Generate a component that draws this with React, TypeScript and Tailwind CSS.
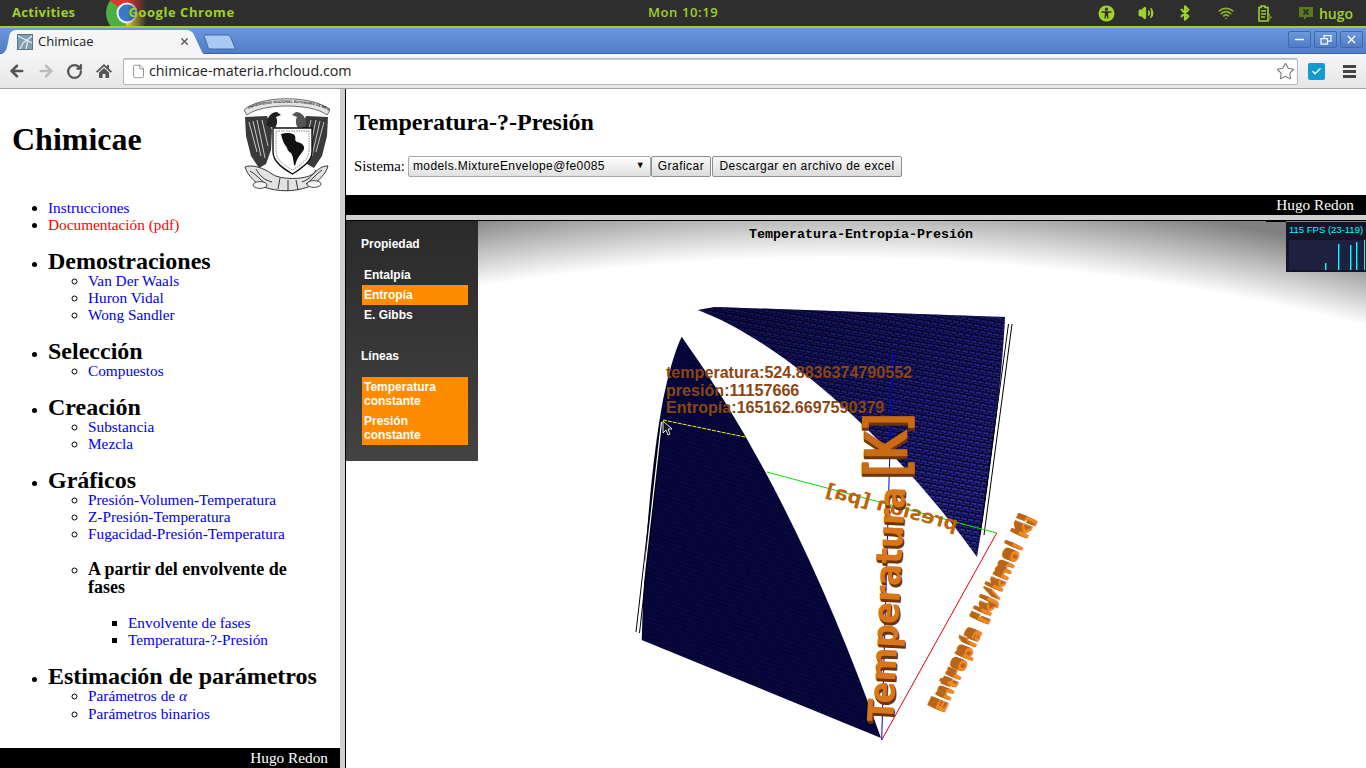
import { ArrowLeft, ArrowRight, RotateCw, Star, File, Minus, X, Check, Volume2, Bluetooth, Wifi } from 'lucide-react';

const serif = 'font-["Liberation_Serif",serif]';

function ChromeLogo() {
    return (
        <svg width="44" height="26" viewBox="0 0 44 26" className="absolute left-[105px] top-0">
            <defs>
                <linearGradient id="fadeLogo" x1="0" x2="1" y1="0" y2="0">
                    <stop offset="0.5" stopColor="#2e2e2e" stopOpacity="0" />
                    <stop offset="0.95" stopColor="#2e2e2e" stopOpacity="1" />
                </linearGradient>
            </defs>
            <circle cx="22" cy="13" r="21" fill="#4caf3f" />
            <path d="M5 1 A21 21 0 0 1 43 13 L22 13 Z" fill="#d8382e" />
            <path d="M43 13 A21 21 0 0 1 20 34 L22 13 Z" fill="#e8c020" />
            <circle cx="22" cy="13" r="10.5" fill="#eef2f6" />
            <circle cx="22" cy="13" r="8.5" fill="#3b78c8" />
            <rect x="0" y="0" width="44" height="26" fill="url(#fadeLogo)" />
        </svg>
    );
}

function TopBar() {
    return (
        <div className='relative flex h-[28px] items-center border-b-2 border-[#9fd126] bg-[#2e2e2e] pr-[13px] font-["Open_Sans",sans-serif] text-[13px] font-bold tracking-[0.3px] text-[#9fd126]'>
            <span className="ml-[12px]">Activities</span>
            <ChromeLogo />
            <span className="relative ml-[53px] tracking-[0.55px]">Google Chrome</span>
            <span className="absolute left-[648px] font-semibold tracking-[0.6px]">Mon 10:19</span>
            <div className="ml-auto flex items-center">
                <svg width="17" height="17" viewBox="0 0 17 17" className="mr-[23px]">
                    <circle cx="8.5" cy="8.5" r="8" fill="#9fd126" />
                    <circle cx="8.5" cy="4.2" r="1.6" fill="#2e2e2e" />
                    <path d="M3.5 6.2 L13.5 6.2 L13.5 7.4 L10 8 L10.6 13.5 L9.4 13.5 L8.5 10 L7.6 13.5 L6.4 13.5 L7 8 L3.5 7.4 Z" fill="#2e2e2e" />
                </svg>
                <Volume2 size={16} strokeWidth={2.4} className="mr-[23px] fill-[#9fd126]" />
                <Bluetooth size={16} strokeWidth={3.2} className="mr-[25px]" />
                <Wifi size={16} strokeWidth={2.6} className="mr-[24px] opacity-80" />
                <svg width="15" height="17" viewBox="0 0 15 17" className="mr-[25px]">
                    <path d="M3 1 H7 V2.5 H10 V16 H1 V2.5 H3 Z" fill="none" stroke="#9fd126" strokeWidth="1.6" />
                    <path d="M3 6 H8 M3 9 H8 M3 12 H7" stroke="#9fd126" strokeWidth="1.4" />
                    <path d="M12 8 L9 13 H11.5 L10.5 16.5 L14.5 11.5 H12 Z" fill="#6f8f20" />
                </svg>
                <svg width="16" height="15" viewBox="0 0 16 15" className="mr-[5px]">
                    <path d="M1 1 H15 V11 H9 L6 14 V11 H1 Z" fill="#5c7a1c" />
                    <path d="M5.5 3.5 L10.5 8.5 M10.5 3.5 L5.5 8.5" stroke="#2e2e2e" strokeWidth="1.8" />
                </svg>
                <span className="text-[14px] font-semibold tracking-normal">hugo</span>
            </div>
        </div>
    );
}

function WindowButton({ children }: { children: React.ReactNode }) {
    return (
        <div className="flex h-[17px] w-[23px] items-center justify-center rounded-[2px] border border-[#3f69a8] bg-gradient-to-b from-[#6c98dc] to-[#4f7cc4] text-white">
            {children}
        </div>
    );
}

function TitleBar() {
    return (
        <div className="relative flex h-[25px] items-start bg-gradient-to-b from-[#6b97dc] to-[#4f7dc8]">
            <div className="relative mt-[1px] h-[25px] w-[204px]">
                <svg width="204" height="25" viewBox="0 0 204 25" className="absolute inset-0">
                    <path d="M0 25 H1 C6 24 7 20 9 8 C10 3 12 1 17 1 H186 C191 1 193 3 195 8 L201 21 C202 23 203 25 204 25 Z" fill="#f5f5f5" />
                </svg>
                <div className="relative flex h-full items-center pl-[17px] pr-[14px]">
                    <svg width="16" height="16" viewBox="0 0 16 16" className="mr-[5px]">
                        <rect x="0.5" y="0.5" width="15" height="15" fill="#7f9db4" stroke="#5c7488" />
                        <path d="M1 2 L15 9 M15 2 L6 9 L3 15 M9 15 L11 6" stroke="#e8eef2" strokeWidth="1.2" fill="none" />
                    </svg>
                    <span className='font-["Open_Sans",sans-serif] text-[13px] text-[#222]'>Chimicae</span>
                    <X size={11} strokeWidth={3} className="ml-auto text-[#555]" />
                </div>
            </div>
            <svg width="34" height="16" viewBox="0 0 34 16" className="ml-[-1px] mt-[6px]">
                <path d="M1 2 C1 1 2 1 3 1 H24 C26 1 27 2 28 4 L32 14 C32 15 31 15 30 15 H8 C6 15 5 14 5 13 Z" fill="#a9c8f2" stroke="#3f69a8" />
            </svg>
            <div className="ml-auto mr-[3px] mt-[3px] flex gap-[3px]">
                <WindowButton><Minus size={13} strokeWidth={3} /></WindowButton>
                <WindowButton>
                    <svg width="12" height="10" viewBox="0 0 12 10" fill="none" stroke="#fff" strokeWidth="1.2">
                        <rect x="4" y="0.6" width="7" height="5.5" />
                        <rect x="1" y="3.6" width="6.5" height="5.5" fill="#5f8bd2" />
                    </svg>
                </WindowButton>
                <WindowButton><X size={13} strokeWidth={2.6} /></WindowButton>
            </div>
        </div>
    );
}

function Toolbar() {
    return (
        <div className="flex h-[36px] items-center border-b border-t border-b-[#a0a0a0] border-t-[#3f62a0] bg-gradient-to-b from-[#f7f7f7] to-[#e6e6e6] pl-[8px]">
            <ArrowLeft size={18} strokeWidth={3.4} className="text-[#555]" />
            <ArrowRight size={18} strokeWidth={3.4} className="ml-[11px] text-[#bdbdbd]" />
            <RotateCw size={17} strokeWidth={3.2} className="ml-[11px] text-[#555]" />
            <svg width="16" height="16" viewBox="0 0 16 16" className="ml-[13px]">
                <path d="M8 1 L11 3.8 V2 H13 V5.7 L16 8.6 L14.8 9.8 L8 3.6 L1.2 9.8 L0 8.6 Z" fill="#555" />
                <path d="M3 9.6 L8 5 L13 9.6 V15 H9.5 V11 H6.5 V15 H3 Z" fill="#555" />
            </svg>
            <div className="ml-[11px] flex h-[27px] w-[1175px] items-center rounded-[2px] border border-[#b8b8b8] bg-white pl-[7px] pr-[2px] shadow-[inset_0_1px_1px_#ccc]">
                <File size={15} strokeWidth={1.4} className="text-[#888]" />
                <span className='ml-[3px] font-["Open_Sans",sans-serif] text-[14.3px] text-[#222]'>chimicae-materia.rhcloud.com</span>
                <Star size={19} strokeWidth={1.4} className="ml-auto text-[#777]" />
            </div>
            <div className="ml-[10px] flex h-[17px] w-[17px] items-center justify-center rounded-[2px] bg-[#129bcf]">
                <Check size={11} strokeWidth={3} className="text-white" />
            </div>
            <svg width="13" height="13" viewBox="0 0 13 13" className="ml-[18px]">
                <path d="M0 0 H13 V3 H0 Z M0 5 H13 V8 H0 Z M0 10 H13 V13 H0 Z" fill="#444" />
            </svg>
        </div>
    );
}

function Emblem() {
    const wing = 'M15 27 L37 26 L42 40 L41 60 L36 74 L29 78 L21 66 L16 46 Z';
    return (
        <svg width="86" height="102" viewBox="14 3 86 102" className="mr-[10px] mt-[4px] shrink-0">
            <defs>
                <path id="emblemArc" d="M15 21 C30 10 84 10 99 21" />
            </defs>
            <path d="M14 20 C30 5 84 5 100 20 L97 25 C82 13 32 13 17 25 Z" fill="#e4e4e4" stroke="#333" strokeWidth="0.7" />
            <text fontFamily="Liberation Sans, sans-serif" fontSize="3.6" fontWeight="700" fill="#222">
                <textPath href="#emblemArc" startOffset="4">UNIVERSIDAD NACIONAL AUTONOMA DE MEXICO</textPath>
            </text>
            {/* aguila y condor */}
            <path d={wing} fill="#3a3a3a" />
            <path d={wing} fill="#3a3a3a" transform="matrix(-1 0 0 1 113 0)" />
            <path d="M19 32 L27 62 M23 31 L31 66 M27 30 L35 68 M32 30 L38 56 M94 32 L86 62 M90 31 L82 66 M86 30 L78 68 M81 30 L75 56" stroke="#d8d8d8" strokeWidth="0.9" fill="none" />
            <path d="M37 36 C36 28 41 22 47 22 L51 25 L46 27 C48 31 47 35 45 38 Z" fill="#222" />
            <path d="M76 36 C77 28 72 22 66 22 L62 25 L67 27 C65 31 66 35 68 38 Z" fill="#555" />
            {/* escudo */}
            <path d="M43 38 H82 V62 C82 72 70 79 62.5 84 C54 79 43 72 43 62 Z" fill="#fff" stroke="#111" strokeWidth="1.4" />
            <path d="M46 41 H79 V61 C79 70 69 76 62.5 80 C55 76 46 70 46 61 Z" fill="none" stroke="#555" strokeWidth="0.7" strokeDasharray="1.5 1" />
            <path d="M51 44 C57 42 64 43 65 46 C66 49 64 50 67 52 C73 53 76 57 73 61 C70 65 67 68 65 76 C63 75 64 67 61 63 C57 61 58 58 55 55 C53 52 52 48 51 44 Z" fill="#111" />
            {/* nopales */}
            <path d="M15 77 C22 74 34 78 42 84 C50 90 75 90 83 84 C90 78 92 76 98 76 C96 84 88 92 78 97 C64 102 48 102 34 97 C26 94 18 86 15 77 Z" fill="#e2e2e2" stroke="#222" strokeWidth="0.9" />
            <path d="M20 81 C26 84 30 90 36 94 M26 79 C30 86 34 90 42 92 M50 88 L48 99 M58 90 L58 101 M66 90 L68 100 M92 80 C86 84 82 90 76 94 M86 80 C82 86 78 90 72 92" stroke="#222" strokeWidth="0.9" fill="none" />
            <ellipse cx="30" cy="95" rx="7" ry="3.4" fill="#f4f4f4" stroke="#222" strokeWidth="0.8" />
            <ellipse cx="84" cy="94" rx="7" ry="3.4" fill="#f4f4f4" stroke="#222" strokeWidth="0.8" />
        </svg>
    );
}

function SideLink({ children, red }: { children: React.ReactNode; red?: boolean }) {
    return <li><span className={red ? 'text-[#ff0000]' : 'text-[#0000ee]'}>{children}</span></li>;
}

function SectionTitle({ children }: { children: React.ReactNode }) {
    return <h2 className="pt-[2px] text-[24px] font-bold leading-[21px] text-black">{children}</h2>;
}

function Sub({ children }: { children: React.ReactNode }) {
    return <ul className="list-[circle] pl-[40px]">{children}</ul>;
}

function Sidebar() {
    return (
        <aside className={`flex w-[340px] shrink-0 flex-col bg-white ${serif} text-[15.3px] leading-[17px]`}>
            <header className="flex h-[110px] items-start justify-between">
                <h1 className="ml-[12px] mt-[32px] text-[32px] font-bold leading-[37px] text-black">Chimicae</h1>
                <Emblem />
            </header>
            <ul className="list-disc pl-[48px]">
                <SideLink>Instrucciones</SideLink>
                <SideLink red>Documentación (pdf)</SideLink>
                <li className="mt-[16px]">
                    <SectionTitle>Demostraciones</SectionTitle>
                    <Sub>
                        <SideLink>Van Der Waals</SideLink>
                        <SideLink>Huron Vidal</SideLink>
                        <SideLink>Wong Sandler</SideLink>
                    </Sub>
                </li>
                <li className="mt-[16px]">
                    <SectionTitle>Selección</SectionTitle>
                    <Sub><SideLink>Compuestos</SideLink></Sub>
                </li>
                <li className="mt-[16px]">
                    <SectionTitle>Creación</SectionTitle>
                    <Sub>
                        <SideLink>Substancia</SideLink>
                        <SideLink>Mezcla</SideLink>
                    </Sub>
                </li>
                <li className="mt-[16px]">
                    <SectionTitle>Gráficos</SectionTitle>
                    <Sub>
                        <SideLink>Presión-Volumen-Temperatura</SideLink>
                        <SideLink>Z-Presión-Temperatura</SideLink>
                        <SideLink>Fugacidad-Presión-Temperatura</SideLink>
                        <li className="mt-[18px]">
                            <h3 className="text-[18px] font-bold leading-[18px] text-black">A partir del envolvente de<br />fases</h3>
                            <ul className="mt-[18px] list-[square] pl-[40px]">
                                <SideLink>Envolvente de fases</SideLink>
                                <SideLink>Temperatura-?-Presión</SideLink>
                            </ul>
                        </li>
                    </Sub>
                </li>
                <li className="mt-[16px]">
                    <SectionTitle>Estimación de parámetros</SectionTitle>
                    <Sub>
                        <SideLink>Parámetros de <i>α</i></SideLink>
                        <li className="mt-[1px]"><span className="text-[#0000ee]">Parámetros binarios</span></li>
                    </Sub>
                </li>
            </ul>
            <footer className="mt-auto h-[20px] bg-black pr-[12px] text-right leading-[19px] text-white">Hugo Redon</footer>
        </aside>
    );
}

function Plot() {
    const topMesh = 'M698 310 L715 307 L1005 317 C1002 380 990 480 977 557 C900 450 790 345 698 310 Z';
    const temperatura = { fontFamily: 'DejaVu Sans, sans-serif', fontSize: 36, fontWeight: 700, textLength: 235, lengthAdjust: 'spacingAndGlyphs' as const };
    const kelvin = { fontFamily: 'DejaVu Sans, sans-serif', fontSize: 58, fontWeight: 700, textLength: 64, lengthAdjust: 'spacingAndGlyphs' as const };
    const entropia = { fontFamily: 'DejaVu Sans, sans-serif', fontSize: 36, fontWeight: 700, textLength: 216, lengthAdjust: 'spacingAndGlyphs' as const };
    return (
        <svg viewBox="346 221 1020 547" className="absolute inset-0 h-full w-full">
            <defs>
                <pattern id="meshDark" width="4.5" height="4.5" patternUnits="userSpaceOnUse" patternTransform="rotate(17 640 640)">
                    <rect width="4.5" height="4.5" fill="#08084c" />
                    <path d="M0 0 H4.5 M0 2.25 H4.5 M1 0 V2.25 M3.2 2.25 V4.5" stroke="#02021c" strokeWidth="0.8" />
                </pattern>
                <pattern id="meshBright" width="7" height="5.5" patternUnits="userSpaceOnUse" patternTransform="rotate(10 800 400)">
                    <rect width="7" height="5.5" fill="#2a2a9c" />
                    <path d="M0 0 H7 M0 2.75 H7 M2 0 V2.75 M5.5 2.75 V5.5" stroke="#03031e" strokeWidth="1.2" />
                </pattern>
                <linearGradient id="meshFade" x1="0.75" y1="0.8" x2="0.25" y2="0">
                    <stop offset="0" stopColor="#000030" stopOpacity="0" />
                    <stop offset="1" stopColor="#000020" stopOpacity="0.55" />
                </linearGradient>
            </defs>
            {/* mallas */}
            <path d={topMesh} fill="url(#meshBright)" />
            <path d={topMesh} fill="url(#meshFade)" />
            <path d="M681.7 336.7 Q795 495 881 738 L641.7 640 C644 560 650 470 663 400 C668 375 675 350 681.7 336.7 Z" fill="url(#meshDark)" />
            {/* ejes */}
            <path d="M636 632 L660 422 M639.5 633 L663 422 M1012 324 L984 535 M1008.5 324 L980 535" stroke="#000" strokeWidth="1" fill="none" />
            <path d="M637.8 632 L661.5 422 M1010 324 L982 535" stroke="#fff" strokeWidth="1.2" fill="none" />
            <path d="M766.7 472 L996.7 533" stroke="#00e000" strokeWidth="1" />
            <path d="M996.7 533 L881.7 740" stroke="#e00000" strokeWidth="1" />
            <path d="M892.7 352 L881.7 740" stroke="#0000e0" strokeWidth="1" />
            <path d="M663 420 L745 437" stroke="#f5f500" strokeWidth="1" strokeDasharray="4 1" />
            {/* etiquetas 3D */}
            <text transform="translate(956 531) rotate(15) scale(-1 1)" fontFamily="DejaVu Sans, sans-serif" fontSize="19" fontWeight="700" textLength="136" lengthAdjust="spacingAndGlyphs" fill="#b9660f">presión [pa]</text>
            {[3, 2, 1].map((d) => (
                <g key={d} fill="#6e3606">
                    <text transform={`translate(${893 + d * 0.4} ${722 + d}) rotate(-87)`} {...temperatura}>Temperatura</text>
                    <text transform={`translate(907 ${477 + d}) rotate(-90)`} {...kelvin}>[K]</text>
                </g>
            ))}
            <text transform="translate(893 722) rotate(-87)" {...temperatura} fill="#d9761a">Temperatura</text>
            <text transform="translate(907 477) rotate(-90)" {...kelvin} fill="#c96a14">[K]</text>
            {[8, 7, 6, 5, 4, 3, 2, 1].map((d) => (
                <text key={d} transform={`translate(${944 - d} ${714 - d * 0.4}) rotate(-64.5) scale(1 0.4)`} {...entropia} fill="#b8651a">Entropía [kJ/kmol K]</text>
            ))}
            <text transform="translate(944 714) rotate(-64.5) scale(1 0.4)" {...entropia} fill="#f08a20">Entropía [kJ/kmol K]</text>
            {/* cursor */}
            <path d="M663 421 L663 433 L666 430 L668 435 L670 434 L668 429 L672 429 Z" fill="#111" stroke="#fff" strokeWidth="0.9" />
        </svg>
    );
}

function FpsMeter() {
    const bars: [number, number][] = [[37, 7], [50, 26], [62, 25], [68, 28], [76, 30]];
    return (
        <div className='absolute right-0 top-[1px] h-[50px] w-[80px] bg-[#14142b] pl-[3px] pt-[2px] font-["Liberation_Sans",sans-serif] text-[9.5px] leading-[12px] text-[#00ffff]'>
            <div className="whitespace-nowrap">115 FPS (23-119)</div>
            <svg width="76" height="30" viewBox="0 0 76 30" className="mt-[4px] block bg-[#1f1f40]">
                {bars.map(([x, h]) => (
                    <rect key={x} x={x - 1} y={30 - h} width="1.4" height={h} fill="#00ffff" />
                ))}
            </svg>
        </div>
    );
}

function ControlPanel() {
    const item = 'flex h-[20px] w-[106px] items-center pl-[2px]';
    return (
        <div className='absolute left-0 top-0 h-[240px] w-[132px] bg-gradient-to-b from-[#2a2a2a] to-[#434343] pl-[16px] font-["Liberation_Sans",sans-serif] text-[12px] font-bold text-white'>
            <div className="-ml-[1px] pt-[16px] leading-[14px]">Propiedad</div>
            <div className="mt-[14px]">
                <div className={item}>Entalpía</div>
                <div className={`${item} bg-[#ff8c00]`}>Entropía</div>
                <div className={item}>E. Gibbs</div>
            </div>
            <div className="-ml-[1px] mt-[24px] leading-[14px]">Líneas</div>
            <div className="mt-[14px] w-[106px] bg-[#ff8c00] py-[3px] pl-[2px] leading-[14px]">
                <div>Temperatura<br />constante</div>
                <div className="mt-[6px]">Presión<br />constante</div>
            </div>
        </div>
    );
}

function Main() {
    return (
        <main className={`flex min-w-0 flex-1 flex-col ${serif}`}>
            <section className="h-[106px] bg-white pl-[8px]">
                <h2 className="pt-[19px] text-[24px] font-bold leading-[28px] text-black">Temperatura-?-Presión</h2>
                <div className="mt-[19px] flex items-center text-[14.8px] text-black">
                    <span className="mr-[3px]">Sistema:</span>
                    <div className='flex h-[21px] w-[243px] items-center justify-between rounded-[2px] border border-[#a8a8a8] bg-gradient-to-b from-white to-[#e0e0e0] px-[4px] font-["Liberation_Sans",sans-serif] text-[12px] tracking-[0.4px]'>
                        <span>models.MixtureEnvelope@fe0085</span>
                        <span className="pr-[1px] text-[9px]">▼</span>
                    </div>
                    <button className='h-[21px] w-[60px] rounded-[2px] border border-[#8f8f8f] bg-gradient-to-b from-[#f8f8f8] to-[#dcdcdc] font-["Liberation_Sans",sans-serif] text-[12px] tracking-[0.45px]'>Graficar</button>
                    <button className='ml-[1px] h-[21px] w-[190px] rounded-[2px] border border-[#8f8f8f] bg-gradient-to-b from-[#f8f8f8] to-[#dcdcdc] font-["Liberation_Sans",sans-serif] text-[12px] tracking-[0.45px]'>Descargar en archivo de excel</button>
                </div>
            </section>
            <div className="h-[20px] bg-black pr-[12px] text-right text-[15.3px] leading-[19px] text-white">Hugo Redon</div>
            <div className="h-[6px] border-b border-b-black bg-[#cfcfcf]" />
            <div className="relative min-h-0 flex-1 overflow-hidden bg-[radial-gradient(circle_at_484px_2187px,#ffffff_2150px,#808080_2220px)]">
                <Plot />
                <div className='absolute left-[10px] right-0 top-[4px] text-center font-["Liberation_Mono",monospace] text-[13.33px] font-bold text-black'>Temperatura-Entropía-Presión</div>
                <div className='absolute left-[320px] top-[143px] font-["Liberation_Sans",sans-serif] text-[16.1px] font-bold leading-[17.5px] text-[#8b4513]'>
                    temperatura:524.8836374790552<br />presión:11157666<br />Entropía:165162.6697590379
                </div>
                <ControlPanel />
                <div className="absolute right-[80px] top-0 h-[1px] w-[20px] bg-black" />
                <FpsMeter />
            </div>
        </main>
    );
}

export default function App() {
    return (
        <div className="flex h-screen w-full flex-col overflow-hidden bg-white">
            <TopBar />
            <TitleBar />
            <Toolbar />
            <div className="flex min-h-0 flex-1">
                <Sidebar />
                <div className="w-[6px] shrink-0 border-r border-r-black bg-[#cfcfcf]" />
                <Main />
            </div>
        </div>
    );
}
